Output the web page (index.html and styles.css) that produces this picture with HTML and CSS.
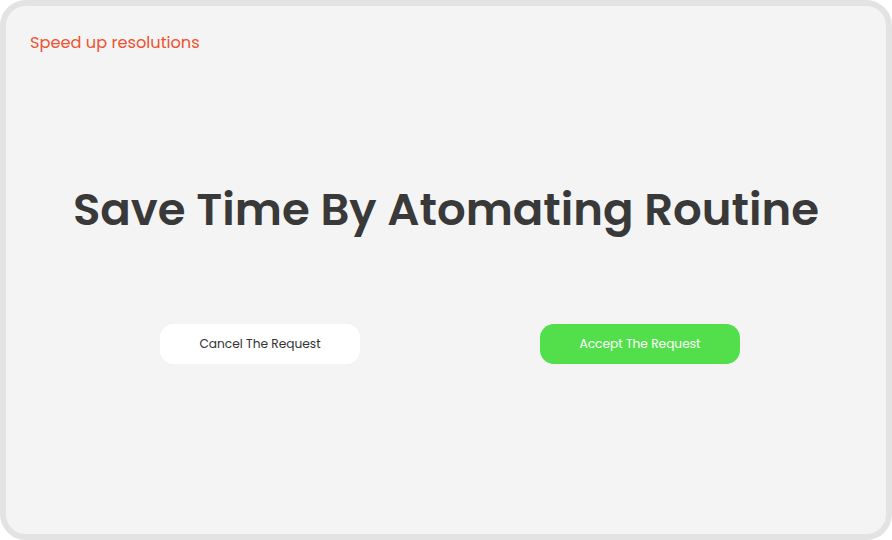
FILE: index.html
```html
<!DOCTYPE html>
<html lang="en">
<head>
<meta charset="utf-8">
<title>Speed up resolutions</title>
<link rel="stylesheet" href="styles.css">
</head>
<body>
<main class="frame">
  <p class="eyebrow">Speed up resolutions</p>
  <h1 class="title">Save Time By Atomating Routine</h1>
  <div class="actions">
    <button class="btn btn-cancel" type="button">Cancel The Request</button>
    <button class="btn btn-accept" type="button">Accept The Request</button>
  </div>
</main>
</body>
</html>
```
FILE: styles.css
```css
* { box-sizing: border-box; }
html, body { margin: 0; padding: 0; }
body {
  width: 892px;
  height: 540px;
  background: #ffffff;
  font-family: "Poppins", "Inter", "Open Sans", sans-serif;
}
.frame {
  width: 892px;
  height: 540px;
  border: 6px solid #e3e3e3;
  border-radius: 26px;
  background: #f4f4f4;
  padding: 27px 0 0 24px;
  display: flex;
  flex-direction: column;
}
.eyebrow {
  margin: 0;
  font-size: 16.2px;
  line-height: 20px;
  color: #ee5230;
  font-weight: 400;
}
.title {
  margin: 129px 0 0 -24px;
  text-align: center;
  font-size: 45px;
  line-height: 56px;
  font-weight: 600;
  color: #393939;
}
.actions {
  margin: 86px 0 0 -24px;
  display: flex;
  justify-content: center;
  gap: 180px;
  padding-left: 8px;
}
.btn {
  width: 200px;
  height: 40px;
  border: none;
  border-radius: 14px;
  font-family: inherit;
  font-size: 12.2px;
  font-weight: 400;
  cursor: pointer;
}
.btn-cancel { background: #ffffff; color: #333333; }
.btn-accept { background: #53de4c; color: #ffffff; }
```
